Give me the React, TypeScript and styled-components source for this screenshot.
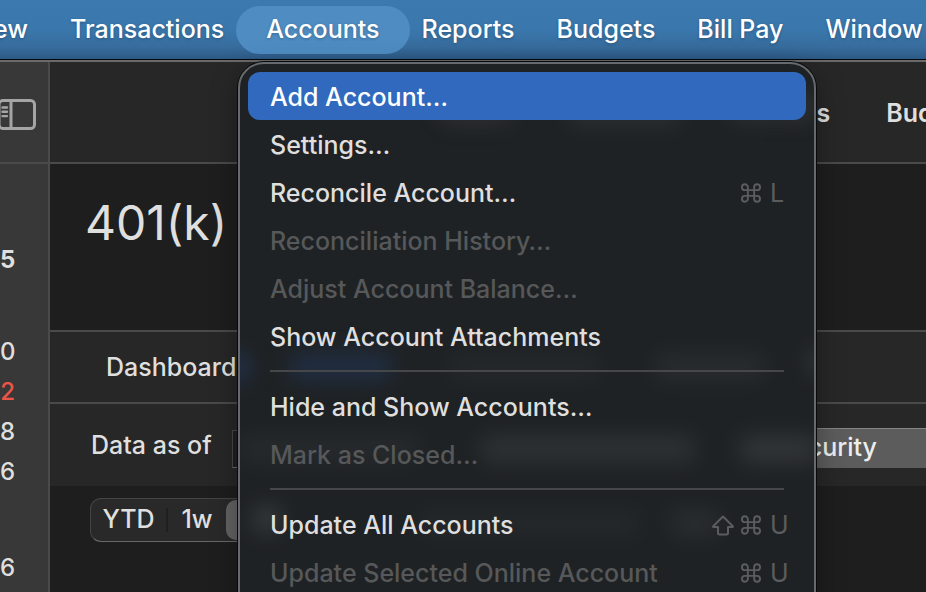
import React from "react";
import styled, { createGlobalStyle, css } from "styled-components";

const GlobalStyle = createGlobalStyle`
  *, *::before, *::after { box-sizing: border-box; }
  body { margin: 0; background: #1e1e1e; }
  button, input { font: inherit; color: inherit; }
`;

const Screen = styled.div`
  position: relative;
  display: flex;
  flex-direction: column;
  height: 100vh;
  overflow: hidden;
  font-family: Inter, "Liberation Sans", sans-serif;
  font-size: 25px;
  line-height: 30px;
  color: #dfdfdf;
`;

const MenuBar = styled.nav`
  display: flex;
  align-items: center;
  flex: none;
  height: 59px;
  padding-left: 50px;
  background: linear-gradient(#3c79ae 0%, #3a77ac 50%, #376c9d 80%, #2d5a85 100%);
  overflow: hidden;
`;

const MenuBarItem = styled.button<{ $open?: boolean; $cut?: boolean }>`
  flex: none;
  height: 48px;
  padding: 0 21px 2px;
  border: 0;
  background: none;
  color: #fff;
  font-weight: 500;
  white-space: nowrap;
  text-shadow: 0 1px 3px rgba(0, 0, 0, 0.25);
  ${(p) => p.$cut && css`margin-left: -102px;`}
  ${(p) =>
    p.$open &&
    css`
      margin: 0 -9px;
      padding: 0 30px 2px;
      border-radius: 24px;
      background: #4e8cc2;
    `}
`;

const AppWindow = styled.div`
  display: grid;
  grid-template-columns: 50px minmax(0, 1fr);
  flex: 1;
  min-height: 0;
  border-top: 1px solid #05080c;
  box-shadow: inset 0 2px #6a6a6a;
  padding-top: 2px;
`;

const Sidebar = styled.aside`
  display: flex;
  flex-direction: column;
  border-right: 2px solid #4a4a4a;
  background: #383838;
`;

const SidebarTop = styled.div`
  flex: none;
  height: 102px;
  padding-top: 36px;
  border-bottom: 2px solid #4a4a4a;
`;

const IconButton = styled.button`
  display: block;
  padding: 0;
  border: 0;
  background: none;
  svg { display: block; }
`;

const Balances = styled.ul`
  margin: 0;
  padding: 76px 33px 0 0;
  list-style: none;
`;

const Balance = styled.li<{ $gap?: number; $bold?: boolean; $negative?: boolean }>`
  height: 40px;
  margin-top: ${(p) => p.$gap ?? 0}px;
  line-height: 40px;
  font-size: 24px;
  text-align: right;
  font-weight: ${(p) => (p.$bold ? 700 : 500)};
  color: ${(p) => (p.$negative ? "#ee5547" : "#dfdfdf")};
`;

const Content = styled.main`
  display: flex;
  flex-direction: column;
  min-width: 0;
  background: #1e1e1e;
`;

const Toolbar = styled.div`
  display: flex;
  align-items: center;
  flex: none;
  gap: 56px;
  height: 102px;
  padding-left: 686px;
  border-bottom: 2px solid #4a4a4a;
  background: #272727;
  overflow: hidden;
`;

const ToolbarButton = styled.button`
  flex: none;
  padding: 2px 0 0;
  border: 0;
  background: none;
  font-weight: 600;
`;

const AccountHeader = styled.header`
  flex: none;
  height: 168px;
  padding: 29px 35px;
  border-bottom: 2px solid #4a4a4a;
`;

const Title = styled.h1`
  margin: 0;
  font-size: 48px;
  line-height: 60px;
  font-weight: 400;
`;

const Tabs = styled.div`
  display: flex;
  align-items: center;
  flex: none;
  height: 72px;
  padding-left: 56px;
  border-bottom: 2px solid #4a4a4a;
  background: #272727;
`;

const Tab = styled.button`
  padding: 0;
  border: 0;
  background: none;
  font-weight: 500;
`;

const FilterBar = styled.div`
  display: flex;
  align-items: center;
  flex: none;
  height: 82px;
  padding-left: 41px;
  background: #272727;
  overflow: hidden;
`;

const FieldLabel = styled.label`
  flex: none;
  width: 141px;
  font-weight: 500;
`;

const DateField = styled.input`
  flex: none;
  width: 150px;
  height: 38px;
  margin-top: 8px;
  border: 1px solid #484848;
  border-bottom-color: #686868;
  background: #202020;
`;

const GroupButton = styled.button`
  display: flex;
  align-items: center;
  flex: 1;
  height: 40px;
  margin: 6px 0 0 350px;
  padding: 0 49px 3px 0;
  justify-content: flex-end;
  border: 0;
  border-top: 1px solid #858585;
  background: #5c5c5c;
  color: #ededed;
  font-weight: 500;
`;

const RangeRow = styled.div`
  display: flex;
  padding: 12px 0 0 40px;
`;

const Segments = styled.div`
  display: flex;
  align-items: center;
  height: 44px;
  border: 1px solid #444;
  border-bottom-color: #686868;
  border-radius: 11px;
  background: #292929;
`;

const Segment = styled.button<{ $selected?: boolean; $width: number }>`
  width: ${(p) => p.$width}px;
  height: 40px;
  padding: 0 0 2px;
  border: 0;
  border-radius: ${(p) => (p.$selected ? 10 : 0)}px;
  background: ${(p) => (p.$selected ? "#636363" : "none")};
  font-weight: 500;
`;

const SegmentDivider = styled.span`
  width: 2px;
  height: 24px;
  background: #202020;
`;

const Menu = styled.div`
  position: absolute;
  top: 62px;
  left: 238px;
  width: 578px;
  padding: 8px 8px 48px;
  border: 2px solid #666a6e;
  border-radius: 26px;
  background: #1f2224;
  box-shadow: 0 0 0 1px #08090a, 0 8px 28px rgba(0, 0, 0, 0.35);
  overflow: hidden;
`;

const Glow = styled.span<{ $x: number; $y: number; $w: number; $blue?: boolean; $strength?: number }>`
  position: absolute;
  left: ${(p) => p.$x}px;
  top: ${(p) => p.$y}px;
  width: ${(p) => p.$w}px;
  height: 26px;
  border-radius: 8px;
  background: ${(p) => (p.$blue ? "#22375c" : "#55585a")};
  opacity: ${(p) => p.$strength ?? 0.35};
  filter: blur(11px);
`;

const MenuItem = styled.button<{ $active?: boolean }>`
  position: relative;
  display: flex;
  align-items: center;
  justify-content: space-between;
  width: 100%;
  height: 48px;
  padding: 2px 22px 0;
  border: 0;
  border-radius: 12px;
  background: ${(p) => (p.$active ? "#3069bd" : "none")};
  color: ${(p) => (p.$active ? "#fff" : "#dfdfdf")};
  font-weight: 500;
  text-align: left;
  white-space: nowrap;
  &:disabled { color: #565859; }
`;

const Separator = styled.hr`
  position: relative;
  height: 2px;
  margin: 10px 22px;
  border: 0;
  background: #454748;
`;

const Shortcut = styled.span`
  display: flex;
  align-items: center;
  color: #5a5c5d;
  font-weight: 400;
  svg { flex: none; }
`;

const Key = styled.span`
  width: 14px;
  margin-left: 9px;
`;

const CommandIcon = () => (
  <svg width="20" height="20" viewBox="0 0 21 21" fill="none" stroke="currentColor" strokeWidth="2">
    <path d="M7.2 4.4A3.1 3.1 0 1 0 4.1 7.5H16.9A3.1 3.1 0 1 0 13.8 4.4V16.6A3.1 3.1 0 1 0 16.9 13.5H4.1A3.1 3.1 0 1 0 7.2 16.6Z" />
  </svg>
);

const ShiftIcon = () => (
  <svg width="29" height="21" viewBox="0 0 29 21" fill="none" stroke="currentColor" strokeWidth="2" strokeLinejoin="round">
    <path d="M11 1.5 1.2 11.2Q.8 12 1.8 12H6V18Q6 19.5 7.5 19.5H14.5Q16 19.5 16 18V12H20.2Q21.2 12 20.8 11.2Z" />
  </svg>
);

const SidebarIcon = () => (
  <svg width="37" height="32" viewBox="0 0 37 32" fill="none" stroke="#a5a5a5">
    <rect x="-1" y="2.5" width="35.5" height="28" rx="4" strokeWidth="3" />
    <path d="M11 3V30" strokeWidth="3" />
    <path d="M2.5 9.5H7M2.5 13.8H7M2.5 18.1H7" strokeWidth="2.4" strokeLinecap="round" />
  </svg>
);

type Entry = { label: string; keys?: string; shift?: boolean; disabled?: boolean; active?: boolean };

const groups: Entry[][] = [
  [
    { label: "Add Account…", active: true },
    { label: "Settings…" },
    { label: "Reconcile Account…", keys: "L" },
    { label: "Reconciliation History…", disabled: true },
    { label: "Adjust Account Balance…", disabled: true },
    { label: "Show Account Attachments" },
  ],
  [{ label: "Hide and Show Accounts…" }, { label: "Mark as Closed…", disabled: true }],
  [
    { label: "Update All Accounts", keys: "U", shift: true },
    { label: "Update Selected Online Account", keys: "U", disabled: true },
  ],
];

const balances = [
  { value: "5", bold: true },
  { value: "0", gap: 52 },
  { value: "2", negative: true },
  { value: "8" },
  { value: "6" },
  { value: "6", gap: 56 },
];

const glows = [
  { x: 200, y: 34, w: 70, s: 0.28 },
  { x: 330, y: 34, w: 110, s: 0.28 },
  { x: 490, y: 30, w: 86, s: 0.3 },
  { x: -14, y: 290, w: 22, blue: true, s: 0.9 },
  { x: 50, y: 290, w: 102, blue: true, s: 0.6 },
  { x: 210, y: 290, w: 150, s: 0.12 },
  { x: 415, y: 290, w: 110, s: 0.2 },
  { x: 570, y: 284, w: 14, s: 0.5 },
  { x: 0, y: 372, w: 180, s: 0.16 },
  { x: 240, y: 372, w: 215, s: 0.3 },
  { x: 500, y: 372, w: 78, s: 0.38 },
  { x: 14, y: 442, w: 26, s: 0.5 },
  { x: 180, y: 446, w: 220, s: 0.12 },
  { x: 430, y: 446, w: 50, s: 0.22 },
];

export default function App() {
  return (
    <Screen>
      <GlobalStyle />
      <MenuBar aria-label="Menu bar">
        <MenuBarItem $cut>View</MenuBarItem>
        <MenuBarItem>Transactions</MenuBarItem>
        <MenuBarItem $open aria-expanded="true">Accounts</MenuBarItem>
        <MenuBarItem>Reports</MenuBarItem>
        <MenuBarItem>Budgets</MenuBarItem>
        <MenuBarItem>Bill Pay</MenuBarItem>
        <MenuBarItem>Window</MenuBarItem>
      </MenuBar>

      <AppWindow>
        <Sidebar>
          <SidebarTop>
            <IconButton aria-label="Toggle sidebar">
              <SidebarIcon />
            </IconButton>
          </SidebarTop>
          <Balances>
            {balances.map((b, i) => (
              <Balance key={i} $gap={b.gap} $bold={b.bold} $negative={b.negative}>
                {b.value}
              </Balance>
            ))}
          </Balances>
        </Sidebar>

        <Content>
          <Toolbar>
            <ToolbarButton>Reports</ToolbarButton>
            <ToolbarButton>Budgets</ToolbarButton>
          </Toolbar>
          <AccountHeader>
            <Title>401(k)</Title>
          </AccountHeader>
          <Tabs>
            <Tab>Dashboard</Tab>
          </Tabs>
          <FilterBar>
            <FieldLabel htmlFor="as-of">Data as of</FieldLabel>
            <DateField id="as-of" />
            <GroupButton>Security</GroupButton>
          </FilterBar>
          <RangeRow>
            <Segments>
              <Segment $width={75}>YTD</Segment>
              <SegmentDivider />
              <Segment $width={58}>1w</Segment>
              <Segment $width={60} $selected aria-label="Selected range" />
            </Segments>
          </RangeRow>
        </Content>
      </AppWindow>

      <Menu aria-label="Accounts">
        {glows.map((g, i) => (
          <Glow key={i} $x={g.x} $y={g.y} $w={g.w} $blue={g.blue} $strength={g.s} />
        ))}
        {groups.map((group, g) => (
          <React.Fragment key={g}>
            {g > 0 && <Separator />}
            {group.map((item) => (
              <MenuItem key={item.label} $active={item.active} disabled={item.disabled}>
                {item.label}
                {item.keys && (
                  <Shortcut>
                    {item.shift && <ShiftIcon />}
                    <CommandIcon />
                    <Key>{item.keys}</Key>
                  </Shortcut>
                )}
              </MenuItem>
            ))}
          </React.Fragment>
        ))}
      </Menu>
    </Screen>
  );
}
